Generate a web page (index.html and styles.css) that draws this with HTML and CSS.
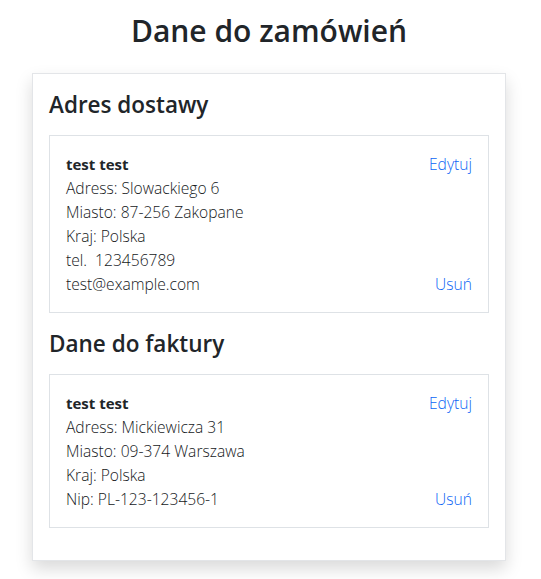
FILE: index.html
```html
<!DOCTYPE html>
<html lang="pl">
<head>
<meta charset="utf-8">
<title>Dane do zamówień</title>
<link rel="stylesheet" href="styles.css">
</head>
<body>
<main class="page">
  <h2 class="page-title">Dane do zamówień</h2>
  <section class="card">
    <h4 class="section-title">Adres dostawy</h4>
    <div class="address">
      <div class="address-lines">
        <div class="name">test test</div>
        <div>Adress: Slowackiego 6</div>
        <div>Miasto: 87-256 Zakopane</div>
        <div>Kraj: Polska</div>
        <div>tel.&nbsp; 123456789</div>
        <div>test@example.com</div>
      </div>
      <div class="actions">
        <a href="#" class="link">Edytuj</a>
        <a href="#" class="link">Usuń</a>
      </div>
    </div>
    <h4 class="section-title">Dane do faktury</h4>
    <div class="address">
      <div class="address-lines">
        <div class="name">test test</div>
        <div>Adress: Mickiewicza 31</div>
        <div>Miasto: 09-374 Warszawa</div>
        <div>Kraj: Polska</div>
        <div>Nip: PL-123-123456-1</div>
      </div>
      <div class="actions">
        <a href="#" class="link">Edytuj</a>
        <a href="#" class="link">Usuń</a>
      </div>
    </div>
  </section>
</main>
</body>
</html>
```
FILE: styles.css
```css
* { box-sizing: border-box; }
html, body { margin: 0; padding: 0; background: #fff; }
body {
  font-family: "Open Sans", "Noto Sans", sans-serif;
  font-size: 15px;
  line-height: 24px;
  color: #212529;
}
.page {
  padding: 12px 32px 19px 32px;
  width: 538px;
}
.page-title {
  margin: 0 0 24px 0;
  text-align: center;
  font-size: 30px;
  font-weight: 600;
  line-height: 37px;
}
.card {
  border: 1px solid #e3e5e8;
  background: #fff;
  padding: 16px;
  box-shadow: 0 8px 16px rgba(0, 0, 0, 0.15);
}
.section-title {
  margin: 0 0 16px 0;
  font-size: 22.5px;
  font-weight: 600;
  line-height: 29px;
}
.address {
  border: 1px solid #dee2e6;
  padding: 16px;
  margin-bottom: 16px;
  display: flex;
  justify-content: space-between;
  font-size: 15.6px;
  font-weight: 300;
  color: #15181b;
}
.name { font-weight: 700; font-size: 15px; color: #212529; }
.actions {
  display: flex;
  flex-direction: column;
  justify-content: space-between;
  align-items: flex-end;
}
.link {
  color: #0a64f5;
  text-decoration: none;
}
```
